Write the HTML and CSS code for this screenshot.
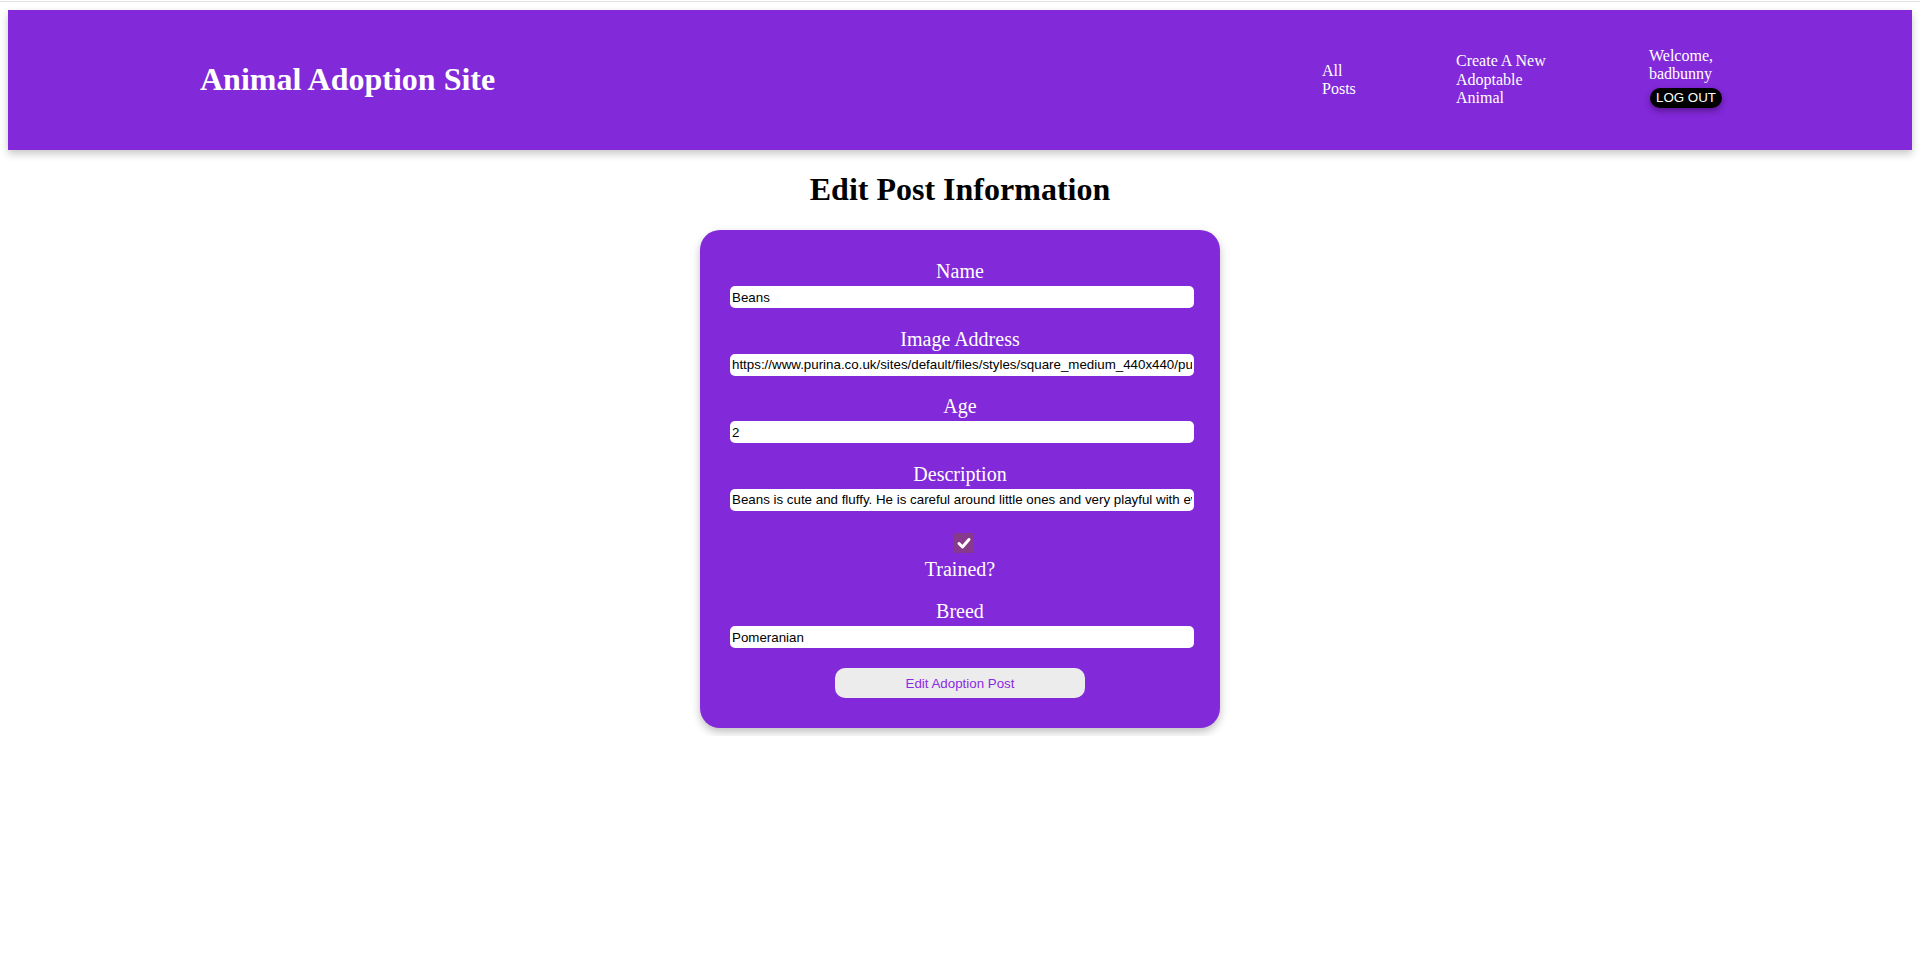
FILE: index.html
```html
<!DOCTYPE html>
<html lang="en">
<head>
<meta charset="utf-8">
<title>Animal Adoption Site</title>
<link rel="stylesheet" href="styles.css">
</head>
<body>
  <header class="navbar">
    <h1 class="site-title">Animal Adoption Site</h1>
    <nav class="nav">
      <a class="nav-item nav-all" href="#">All Posts</a>
      <a class="nav-item nav-create" href="#">Create A New Adoptable Animal</a>
      <div class="nav-item nav-user">
        <div class="welcome">Welcome, badbunny</div>
        <button class="logout" type="button">LOG OUT</button>
      </div>
    </nav>
  </header>

  <main class="main">
    <h1 class="page-title">Edit Post Information</h1>
    <form class="card">
      <div class="field">
        <label class="field-label" for="name">Name</label>
        <input class="field-input" id="name" type="text" value="Beans">
      </div>
      <div class="field">
        <label class="field-label" for="image">Image Address</label>
        <input class="field-input" id="image" type="text" value="https://www.purina.co.uk/sites/default/files/styles/square_medium_440x440/public/2022-06/Pomeranian.jpg">
      </div>
      <div class="field">
        <label class="field-label" for="age">Age</label>
        <input class="field-input" id="age" type="text" value="2">
      </div>
      <div class="field">
        <label class="field-label" for="desc">Description</label>
        <input class="field-input" id="desc" type="text" value="Beans is cute and fluffy. He is careful around little ones and very playful with everyone he meets.">
      </div>
      <div class="check-field">
        <span class="checkbox" role="checkbox" aria-checked="true">
          <svg viewBox="0 0 20 20" width="20" height="20" aria-hidden="true">
            <path d="M5 10.5 L8.5 14 L15 6.5" fill="none" stroke="#ffffff" stroke-width="3" stroke-linecap="round" stroke-linejoin="round"/>
          </svg>
        </span>
        <span class="field-label">Trained?</span>
      </div>
      <div class="field field-last">
        <label class="field-label" for="breed">Breed</label>
        <input class="field-input" id="breed" type="text" value="Pomeranian">
      </div>
      <button class="submit" type="button">Edit Adoption Post</button>
    </form>
  </main>
</body>
</html>
```

FILE: styles.css
```css
html {
  border-top: 1px solid #ffffff;
  background: #ffffff;
}

body {
  margin: 0;
  border-top: 1px solid #e2e2e2;
  padding: 8px 8px 8px 8px;
  font-family: "Liberation Serif", "Times New Roman", serif;
  color: #000000;
  background: #ffffff;
}

.navbar {
  display: flex;
  align-items: center;
  height: 140px;
  padding: 0 163px 0 192px;
  background: #8229d9;
  box-shadow: 0 4px 8px rgba(0, 0, 0, 0.22);
}

.site-title {
  margin: 0 0 2px;
  font-size: 32px;
  font-weight: bold;
  color: #ffffff;
}

.nav {
  margin-left: auto;
  display: flex;
  align-items: center;
  gap: 84px;
}

.nav-item {
  font-size: 16px;
  line-height: 18.4px;
  color: #ffffff;
  text-decoration: none;
}

.nav-all {
  width: 50px;
}

.nav-create {
  width: 109px;
}

.nav-user {
  width: 100px;
  display: flex;
  flex-direction: column;
  align-items: flex-start;
}

.logout {
  margin: 5px 0 5px 1px;
  height: 20px;
  padding: 0 6px;
  border: none;
  border-radius: 10px;
  background: #000000;
  color: #ffffff;
  font-family: "Liberation Sans", Arial, sans-serif;
  font-size: 13.33px;
  line-height: 20px;
  box-shadow: 0 3px 6px rgba(40, 0, 60, 0.45);
}

.main {
  display: flex;
  flex-direction: column;
  align-items: center;
}

.page-title {
  margin: 21px 0 22px;
  font-size: 32px;
  font-weight: bold;
  line-height: 37px;
}

.card {
  width: 460px;
  padding: 30px;
  border-radius: 20px;
  background: #8229d9;
  box-shadow: 0 4px 8px rgba(0, 0, 0, 0.25);
  display: flex;
  flex-direction: column;
  align-items: center;
}

.field {
  width: 100%;
  display: flex;
  flex-direction: column;
  align-items: center;
  margin-bottom: 19.5px;
}

.field-last {
  margin-bottom: 20px;
}

.field-label {
  display: block;
  font-size: 20px;
  line-height: 23px;
  color: #ffffff;
  text-align: center;
}

.field .field-label {
  margin-bottom: 3px;
}

.field-input {
  box-sizing: content-box;
  align-self: flex-start;
  width: 100%;
  height: 20px;
  padding: 1px 2px;
  border: none;
  border-radius: 5px;
  background: #ffffff;
  color: #000000;
  font-family: "Liberation Sans", Arial, sans-serif;
  font-size: 13.33px;
  outline: none;
}

.check-field {
  display: flex;
  flex-direction: column;
  align-items: center;
  margin-bottom: 19px;
}

.checkbox {
  display: block;
  width: 20px;
  height: 20px;
  margin: 3px 0 5px 8px;
  background: #873a8c;
  border-radius: 1px;
}

.checkbox svg {
  display: block;
}

.submit {
  width: 250px;
  height: 30px;
  border: none;
  border-radius: 10px;
  background: #ececec;
  color: #8a2be2;
  font-family: "Liberation Sans", Arial, sans-serif;
  font-size: 13.33px;
}
```
